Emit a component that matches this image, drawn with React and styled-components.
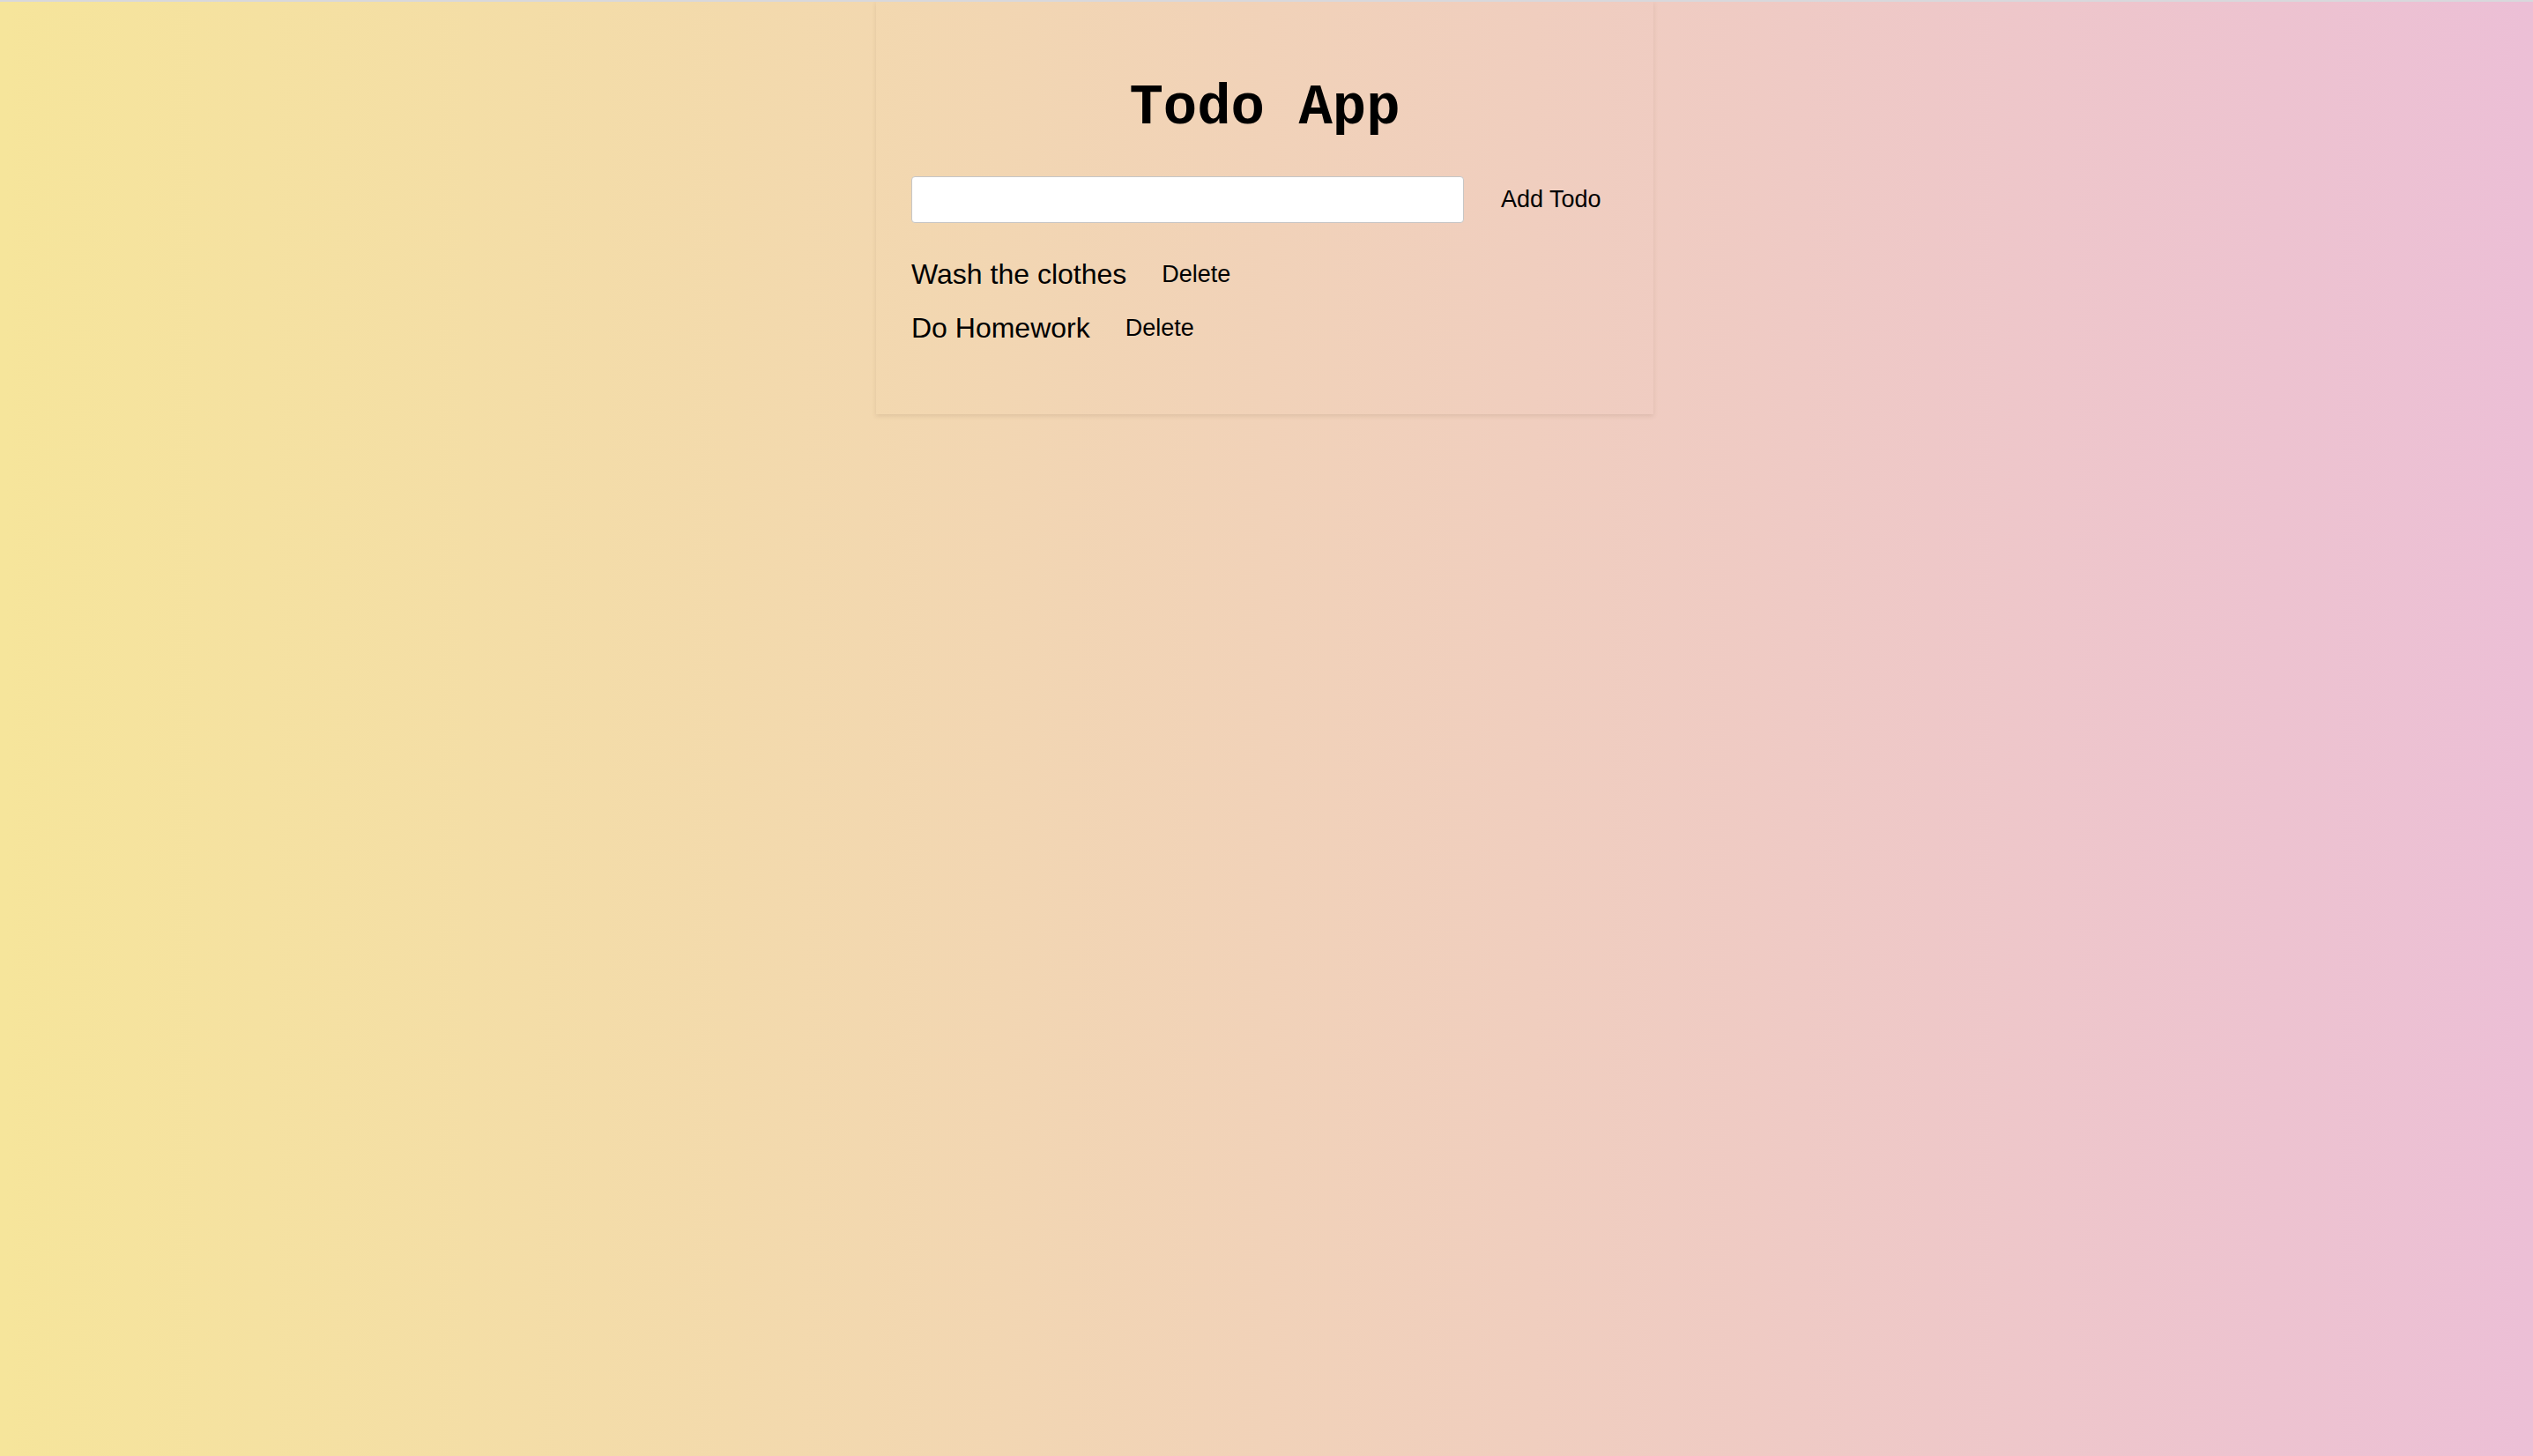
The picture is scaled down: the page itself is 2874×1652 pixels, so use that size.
import React, { useState } from "react";
import styled, { createGlobalStyle } from "styled-components";

const GlobalStyle = createGlobalStyle`
  html, body {
    margin: 0;
    padding: 0;
  }
  body {
    min-height: 100vh;
    box-sizing: border-box;
    border-top: 2px solid #d8d8dc;
    background: linear-gradient(to right, #f6e59b 0%, #ecbfd6 100%);
    font-family: "Liberation Sans", Arial, sans-serif;
    color: #000;
  }
`;

const Card = styled.main`
  box-sizing: border-box;
  width: 882px;
  margin: 0 0 0 calc(50% - 443px);
  padding: 85px 40px 78px;
  background: transparent;
  box-shadow: 0 2px 5px rgba(120, 90, 60, 0.16);
`;

const Title = styled.h1`
  margin: 0;
  text-align: center;
  font-family: "Liberation Mono", "Courier New", monospace;
  font-weight: 700;
  font-size: 64px;
  line-height: normal;
`;

const Form = styled.form`
  display: flex;
  align-items: center;
  gap: 34px;
  margin-top: 41px;
`;

const Input = styled.input`
  box-sizing: border-box;
  width: 627px;
  height: 53px;
  border: 1px solid #c6c6c6;
  border-radius: 4px;
  background: #fff;
  padding: 0 12px;
  font-family: "Liberation Sans", Arial, sans-serif;
  font-size: 27px;
  outline: none;
`;

const TextButton = styled.button`
  border: none;
  background: transparent;
  padding: 4px 8px;
  margin: 0;
  font-family: "Liberation Sans", Arial, sans-serif;
  font-size: 27px;
  line-height: normal;
  color: #000;
  cursor: pointer;
`;

const List = styled.ul`
  list-style: none;
  margin: 39px 0 0;
  padding: 0;
  display: flex;
  flex-direction: column;
  gap: 21.7px;
`;

const Row = styled.li`
  display: flex;
  align-items: center;
  gap: 32px;
`;

const TodoText = styled.span`
  font-size: 32px;
  line-height: normal;
`;

export default function App() {
  const [text, setText] = useState("");
  const [todos, setTodos] = useState(["Wash the clothes", "Do Homework"]);

  const add = (e) => {
    e.preventDefault();
    if (!text.trim()) return;
    setTodos([...todos, text.trim()]);
    setText("");
  };

  return (
    <>
      <GlobalStyle />
      <Card>
        <Title>Todo App</Title>
        <Form onSubmit={add}>
          <Input value={text} onChange={(e) => setText(e.target.value)} />
          <TextButton type="submit">Add Todo</TextButton>
        </Form>
        <List>
          {todos.map((t, i) => (
            <Row key={i}>
              <TodoText>{t}</TodoText>
              <TextButton
                type="button"
                onClick={() => setTodos(todos.filter((_, j) => j !== i))}
              >
                Delete
              </TextButton>
            </Row>
          ))}
        </List>
      </Card>
    </>
  );
}
